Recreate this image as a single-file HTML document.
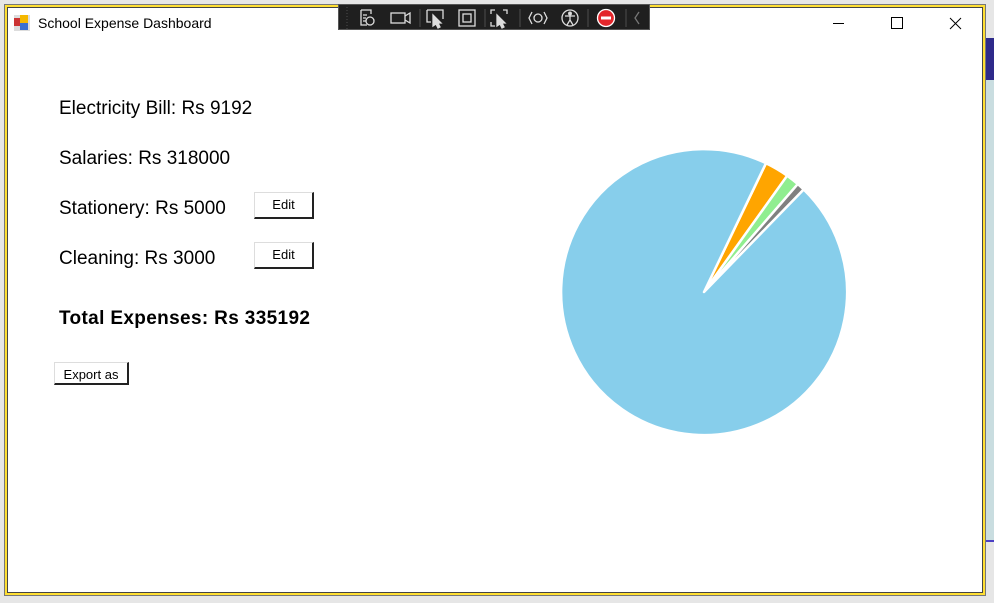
<!DOCTYPE html>
<html><head><meta charset="utf-8"><style>
*{margin:0;padding:0;box-sizing:border-box}
body{width:994px;height:603px;overflow:hidden;background:#e6e6e6;position:relative;font-family:"Segoe UI","Liberation Sans",sans-serif}
.strip{position:absolute;left:986px;top:38px;width:8px;height:42px;background:#2e2a8a}
.strip2{position:absolute;left:986px;top:80px;width:8px;height:460px;background:#c9dde0}
.strip3{position:absolute;left:986px;top:540px;width:8px;height:2px;background:#4b3fc4}
.win{position:absolute;left:4px;top:4px;width:982px;height:592px;border:1px solid #777;background:#ffdf33;padding:2px}
.inner{position:absolute;left:2px;top:2px;right:2px;bottom:2px;background:#fff;border:1px solid #444}
.title{position:absolute;left:38px;top:15px;font-size:14px;color:#000}
.t{position:absolute;font-size:19px;color:#000;left:59px}
.btn{position:absolute;background:#fff;border-right:2px solid #222;border-bottom:2px solid #222;border-top:1px solid #ddd;border-left:1px solid #ddd;font-family:"Liberation Sans",sans-serif;font-size:13px;text-align:center;color:#000}
.tb{position:absolute;left:338px;top:4px;width:312px;height:26px;background:#1f1f1f;border:1px solid #555}
</style></head><body>
<div class="strip"></div><div class="strip2"></div><div class="strip3"></div>
<div class="win"><div class="inner"></div></div>
<svg style="position:absolute;left:13px;top:14px" width="18" height="18" viewBox="0 0 18 18">
<rect x="1" y="1" width="16" height="16" fill="#ddd"/><rect x="1" y="4" width="6" height="8" fill="#c33"/><rect x="7" y="1" width="8" height="8" fill="#f5b800"/><rect x="7" y="9" width="8" height="7" fill="#3a6fd0"/></svg>
<div class="title">School Expense Dashboard</div>
<div class="tb">
<svg width="312" height="26" viewBox="0 0 312 26" fill="none" stroke="#ddd" stroke-width="1.3">
<path d="M22 5h10v4M22 5v15h6M24 10h4M24 13h3M24 16h3"/><circle cx="31" cy="16" r="4"/>
<rect x="52" y="8" width="14" height="10"/><path d="M66 11l5-3v10l-5-3"/>
<path d="M88 5h16v9M88 5v12h4"/><path d="M94 10l8 8-3 0 2 4-2 1-2-4-3 2z" fill="#ddd"/>
<rect x="120" y="5" width="16" height="16"/><rect x="124" y="9" width="8" height="8"/>
<path d="M152 9V5h4M164 5h4v4M152 17v4h4"/><path d="M158 10l8 8-3 0 2 4-2 1-2-4-3 2z" fill="#ddd"/>
<path d="M193 7l-3 6 3 6M205 7l3 6-3 6"/><circle cx="199" cy="13" r="4"/>
<circle cx="231" cy="13" r="8"/><circle cx="231" cy="8.5" r="1.3" fill="#ddd"/><path d="M226 11h10M231 11v4l-3 5M231 15l3 5"/>
<circle cx="267" cy="13" r="8.5" fill="#e3262b" stroke="#fff"/><rect x="262" y="11.5" width="10" height="3" fill="#fff" stroke="none"/>
<path d="M300 7l-4 6 4 6" stroke="#777"/>
<path d="M8 2v22" stroke="#444" stroke-dasharray="1 2"/>
<path d="M81 4v18M146 4v18M181 4v18M249 4v18M287 4v18" stroke="#444"/>
</svg></div>
<svg style="position:absolute;left:830px;top:10px" width="140" height="26" viewBox="0 0 140 26" stroke="#000" fill="none" stroke-width="1">
<path d="M3 13.5h11"/><rect x="61.5" y="7.5" width="11" height="11"/><path d="M120 8l11 11M131 8l-11 11"/></svg>
<div class="t" style="top:98px">Electricity Bill: Rs 9192</div>
<div class="t" style="top:148px">Salaries: Rs 318000</div>
<div class="t" style="top:198px">Stationery: Rs 5000</div>
<div class="t" style="top:248px">Cleaning: Rs 3000</div>
<div class="btn" style="left:254px;top:192px;width:60px;height:27px;line-height:24px">Edit</div>
<div class="btn" style="left:254px;top:242px;width:60px;height:27px;line-height:24px">Edit</div>
<div class="t" style="top:308px;font-weight:bold;letter-spacing:0.35px">Total Expenses: Rs 335192</div>
<div class="btn" style="left:54px;top:362px;width:75px;height:23px;line-height:24px">Export as</div>
<svg style="position:absolute;left:0;top:0" width="994" height="603" viewBox="0 0 994 603">
<g stroke="#fff" stroke-width="2.5" stroke-linejoin="round">
<path d="M704 292L766 163.2A143 143 0 0 1 787.2 175.7Z" fill="#ffa500"/>
<path d="M704 292L787.2 175.7A143 143 0 0 1 797.8 184.1Z" fill="#90ee90"/>
<path d="M704 292L797.8 184.1A143 143 0 0 1 803.7 189.5Z" fill="#808080"/>
<path d="M704 292L803.7 189.5A143 143 0 1 1 766 163.2Z" fill="#87ceeb"/>
</g></svg>
</body></html>
